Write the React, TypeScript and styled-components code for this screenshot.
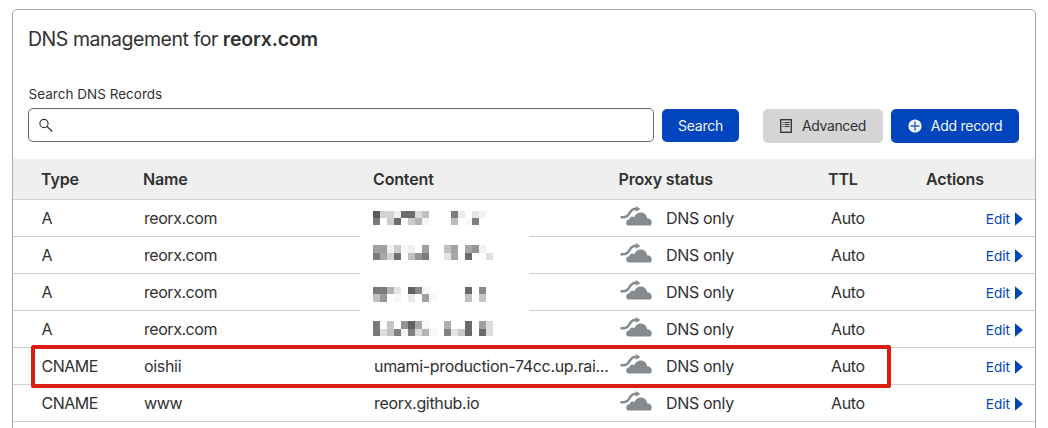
import React from "react";
import styled, { createGlobalStyle, css } from "styled-components";

const GlobalStyle = createGlobalStyle`
  * { box-sizing: border-box; }
  html, body { height: 100%; }
  body {
    margin: 0;
    background: #fff;
    color: #313131;
    font-family: Inter, "Liberation Sans", sans-serif;
    overflow: hidden;
  }
`;

const Page = styled.main`
  width: 1048px;
  height: 428px;
  padding: 9px 12px 0;
  overflow: hidden;
`;

const Panel = styled.section`
  height: 440px;
  border: 1px solid #aaa;
  border-radius: 5px;
  background: #fff;
`;

const Title = styled.h1`
  margin: 0;
  padding: 16px 0 0 15px;
  font-size: 19.5px;
  line-height: 26px;
  font-weight: 400;
  letter-spacing: -0.46px;
  white-space: nowrap;

  strong {
    font-weight: 600;
    letter-spacing: -0.2px;
  }
`;

const SearchLabel = styled.label`
  display: block;
  margin: 34px 0 0 15.5px;
  font-size: 13.5px;
  line-height: 16px;
  letter-spacing: 0.02px;
  white-space: nowrap;
`;

const Toolbar = styled.div`
  display: flex;
  align-items: flex-start;
  padding: 6px 16px 0 15px;
  height: 57px;
`;

const SearchField = styled.div`
  display: flex;
  align-items: center;
  width: 626px;
  height: 34px;
  padding-left: 10px;
  border: 1px solid #6a6a6a;
  border-radius: 5px;
`;

const Button = styled.button<{
  $width: number;
  $height?: number;
  $offset?: number;
  $gap?: number;
  $muted?: boolean;
}>`
  display: flex;
  align-items: center;
  justify-content: center;
  gap: ${(p) => p.$gap ?? 9}px;
  width: ${(p) => p.$width}px;
  height: ${(p) => p.$height ?? 34}px;
  margin: 1px 0 0 ${(p) => p.$offset ?? 8}px;
  padding: 0;
  border: 0;
  border-radius: 5px;
  font: 400 14px/18px Inter, "Liberation Sans", sans-serif;
  letter-spacing: -0.25px;
  white-space: nowrap;
  ${(p) =>
    p.$muted
      ? css`background: #d5d5d5; color: #313131; letter-spacing: -0.4px;`
      : css`background: #0045bd; color: #f2f5fb;`}
`;

const Table = styled.div`
  position: relative;
`;

const columns = css`
  display: grid;
  grid-template-columns: 102px 230px 245px 210px 96px 1fr;
  align-items: center;
  padding-left: 28px;
`;

const HeaderRow = styled.div`
  ${columns}
  height: 41px;
  background: #efefef;
  border-bottom: 1px solid #d0d0d0;
  font-size: 16px;
  font-weight: 600;
  letter-spacing: -0.15px;
`;

const Row = styled.div`
  ${columns}
  height: 37px;
  padding-bottom: 1px;
  border-bottom: 1px solid #d0d0d0;
  font-size: 16px;
  letter-spacing: -0.32px;
  white-space: nowrap;
`;

const Cell = styled.div<{ $indent?: number; $tight?: boolean }>`
  padding-left: ${(p) => p.$indent ?? 0}px;
  ${(p) => p.$tight && css`letter-spacing: -0.45px;`}
`;

const ProxyCell = styled.div`
  display: flex;
  align-items: center;
  gap: 14px;
  padding-left: 2px;

  svg {
    margin-bottom: 4px;
  }
`;

const EditLink = styled.a`
  display: flex;
  align-items: center;
  justify-content: flex-end;
  gap: 5px;
  padding: 2px 12px 0 0;
  font-size: 13.6px;
  letter-spacing: 0;
  color: #0045bd;

  svg {
    flex: none;
  }
`;

const Redaction = styled.div`
  position: absolute;
  left: 347px;
  top: 43px;
  width: 169px;
  height: 144px;
  padding: 8.7px 0 0 12.7px;
  background: #fff;
`;

const Mosaic = styled.div<{ $gapAfter: number }>`
  display: grid;
  grid-template-columns: repeat(17, 7.1px);
  grid-auto-rows: 7.3px;
  margin-bottom: ${(p) => p.$gapAfter}px;
`;

const Pixel = styled.span<{ $shade: string }>`
  background: ${(p) => (p.$shade === "--" ? "transparent" : `#${p.$shade.repeat(3)}`)};
`;

const Highlight = styled.div`
  position: absolute;
  left: 18px;
  top: 186px;
  width: 860px;
  height: 43px;
  border: 4px solid #db1d12;
  border-radius: 2px;
`;

const SearchIcon = () => (
  <svg width="14" height="14" viewBox="0 0 14 14" fill="none" stroke="#313131" strokeWidth="1.1">
    <circle cx="5" cy="5.5" r="4.1" />
    <path d="M8 8.500l5.300 5" strokeWidth="1.300" />
  </svg>
);

const DocIcon = () => (
  <svg width="12" height="14" viewBox="0 0 12 14" fill="none" stroke="#313131">
    <rect x="0.7" y="0.7" width="10.6" height="12.6" strokeWidth="1.3" />
    <path d="M2.5 3.5h1M4.5 3.5h5M2.5 5.5h1M4.5 5.5h5M2.5 7.5h1M4.5 7.5h5" />
  </svg>
);

const PlusIcon = () => (
  <svg width="14" height="14" viewBox="0 0 14 14">
    <circle cx="7" cy="7" r="6.600" fill="#f2f5fb" />
    <path d="M7 2.500v9M2.500 7h9" stroke="#2f66c8" strokeWidth="1.400" />
  </svg>
);

const CloudIcon = () => (
  <svg width="32" height="20" viewBox="0 0 32 20">
    <path
      fill="#868b8f"
      d="M9 19.600a3.100 3.100 0 0 1-2.800-3.200c0-1.900 1.400-3.300 3.400-3.100-.1-1.700 1-2.800 2.700-2.800.8 0 1.500.3 2 .8C15.400 8.400 17.800 6.600 20.700 6.600c3.500 0 6 2.400 6.400 5.700 2.700 0 4.700 1.900 4.700 4.300 0 1.100-.4 2.200-1.200 3z"
    />
    <path
      d="M0.500 11.300C3 11.500 5.500 11.500 7.500 9.800C10.300 7.200 10.500 3.200 14.500 2.900H17"
      fill="none"
      stroke="#868b8f"
      strokeWidth="2.500"
    />
    <path d="M15.800 0L20.400 2.900L15.800 5.800z" fill="#868b8f" />
  </svg>
);

const Arrow = () => (
  <svg width="8" height="14" viewBox="0 0 8 14">
    <path d="M0 0.200L7.900 7L0 13.800z" fill="#0045bd" />
  </svg>
);

const records = [
  { type: "A", name: "reorx.com", content: "" },
  { type: "A", name: "reorx.com", content: "" },
  { type: "A", name: "reorx.com", content: "" },
  { type: "A", name: "reorx.com", content: "" },
  { type: "CNAME", name: "oishii", content: "umami-production-74cc.up.rai..." },
  { type: "CNAME", name: "www", content: "reorx.github.io" },
];

const mosaics = [
  {
    gapAfter: 20.2,
    shades:
      "5a d2 d2 f0 6c 6c dc c0 -- -- -- 7c ea -- e4 f2 -- " +
      "7a -- cc 6c -- cc b4 f4 -- -- -- bc -- f8 80 -- --",
  },
  {
    gapAfter: 27,
    shades:
      "a0 a0 f0 cc f8 f0 -- a0 -- -- c0 a4 -- a8 94 f2 -- " +
      "7a a8 d2 70 -- c0 94 7c -- -- e4 a8 -- 6a -- -- e0",
  },
  {
    gapAfter: 19.8,
    shades:
      "78 7c b4 e4 -- 62 88 f4 -- -- -- -- -- 6a -- 88 -- " +
      "c0 98 -- f8 -- ea -- a0 f8 -- -- -- -- c0 -- c4 --",
  },
  {
    gapAfter: 0,
    shades:
      "7a -- c4 -- 94 62 a8 f8 -- -- b0 -- -- 6a -- a0 dc " +
      "7a dc c4 80 f4 80 dc b4 f8 -- 80 e4 c8 6a -- 6a dc",
  },
];

export default function App() {
  return (
    <Page>
      <GlobalStyle />
      <Panel>
        <Title>
          DNS management for <strong>reorx.com</strong>
        </Title>
        <SearchLabel>Search DNS Records</SearchLabel>
        <Toolbar>
          <SearchField>
            <SearchIcon />
          </SearchField>
          <Button $width={77} $height={33}>Search</Button>
          <Button $width={120} $offset={24} $gap={10} $muted>
            <DocIcon />
            Advanced
          </Button>
          <Button $width={128}>
            <PlusIcon />
            Add record
          </Button>
        </Toolbar>
        <Table>
          <HeaderRow>
            <Cell>Type</Cell>
            <Cell>Name</Cell>
            <Cell>Content</Cell>
            <Cell $indent={0.5}>Proxy status</Cell>
            <Cell>TTL</Cell>
            <Cell $indent={2}>Actions</Cell>
          </HeaderRow>
          {records.map((r, i) => (
            <Row key={i}>
              <Cell $indent={0.4} $tight>{r.type}</Cell>
              <Cell $indent={1} $tight={r.name === "reorx.com"}>{r.name}</Cell>
              <Cell $indent={1}>{r.content}</Cell>
              <ProxyCell>
                <CloudIcon />
                DNS only
              </ProxyCell>
              <Cell $indent={3}>Auto</Cell>
              <EditLink>
                Edit
                <Arrow />
              </EditLink>
            </Row>
          ))}
          <Redaction>
            {mosaics.map((m, i) => (
              <Mosaic key={i} $gapAfter={m.gapAfter}>
                {m.shades.split(" ").map((s, j) => (
                  <Pixel key={j} $shade={s} />
                ))}
              </Mosaic>
            ))}
          </Redaction>
          <Highlight />
        </Table>
      </Panel>
    </Page>
  );
}
